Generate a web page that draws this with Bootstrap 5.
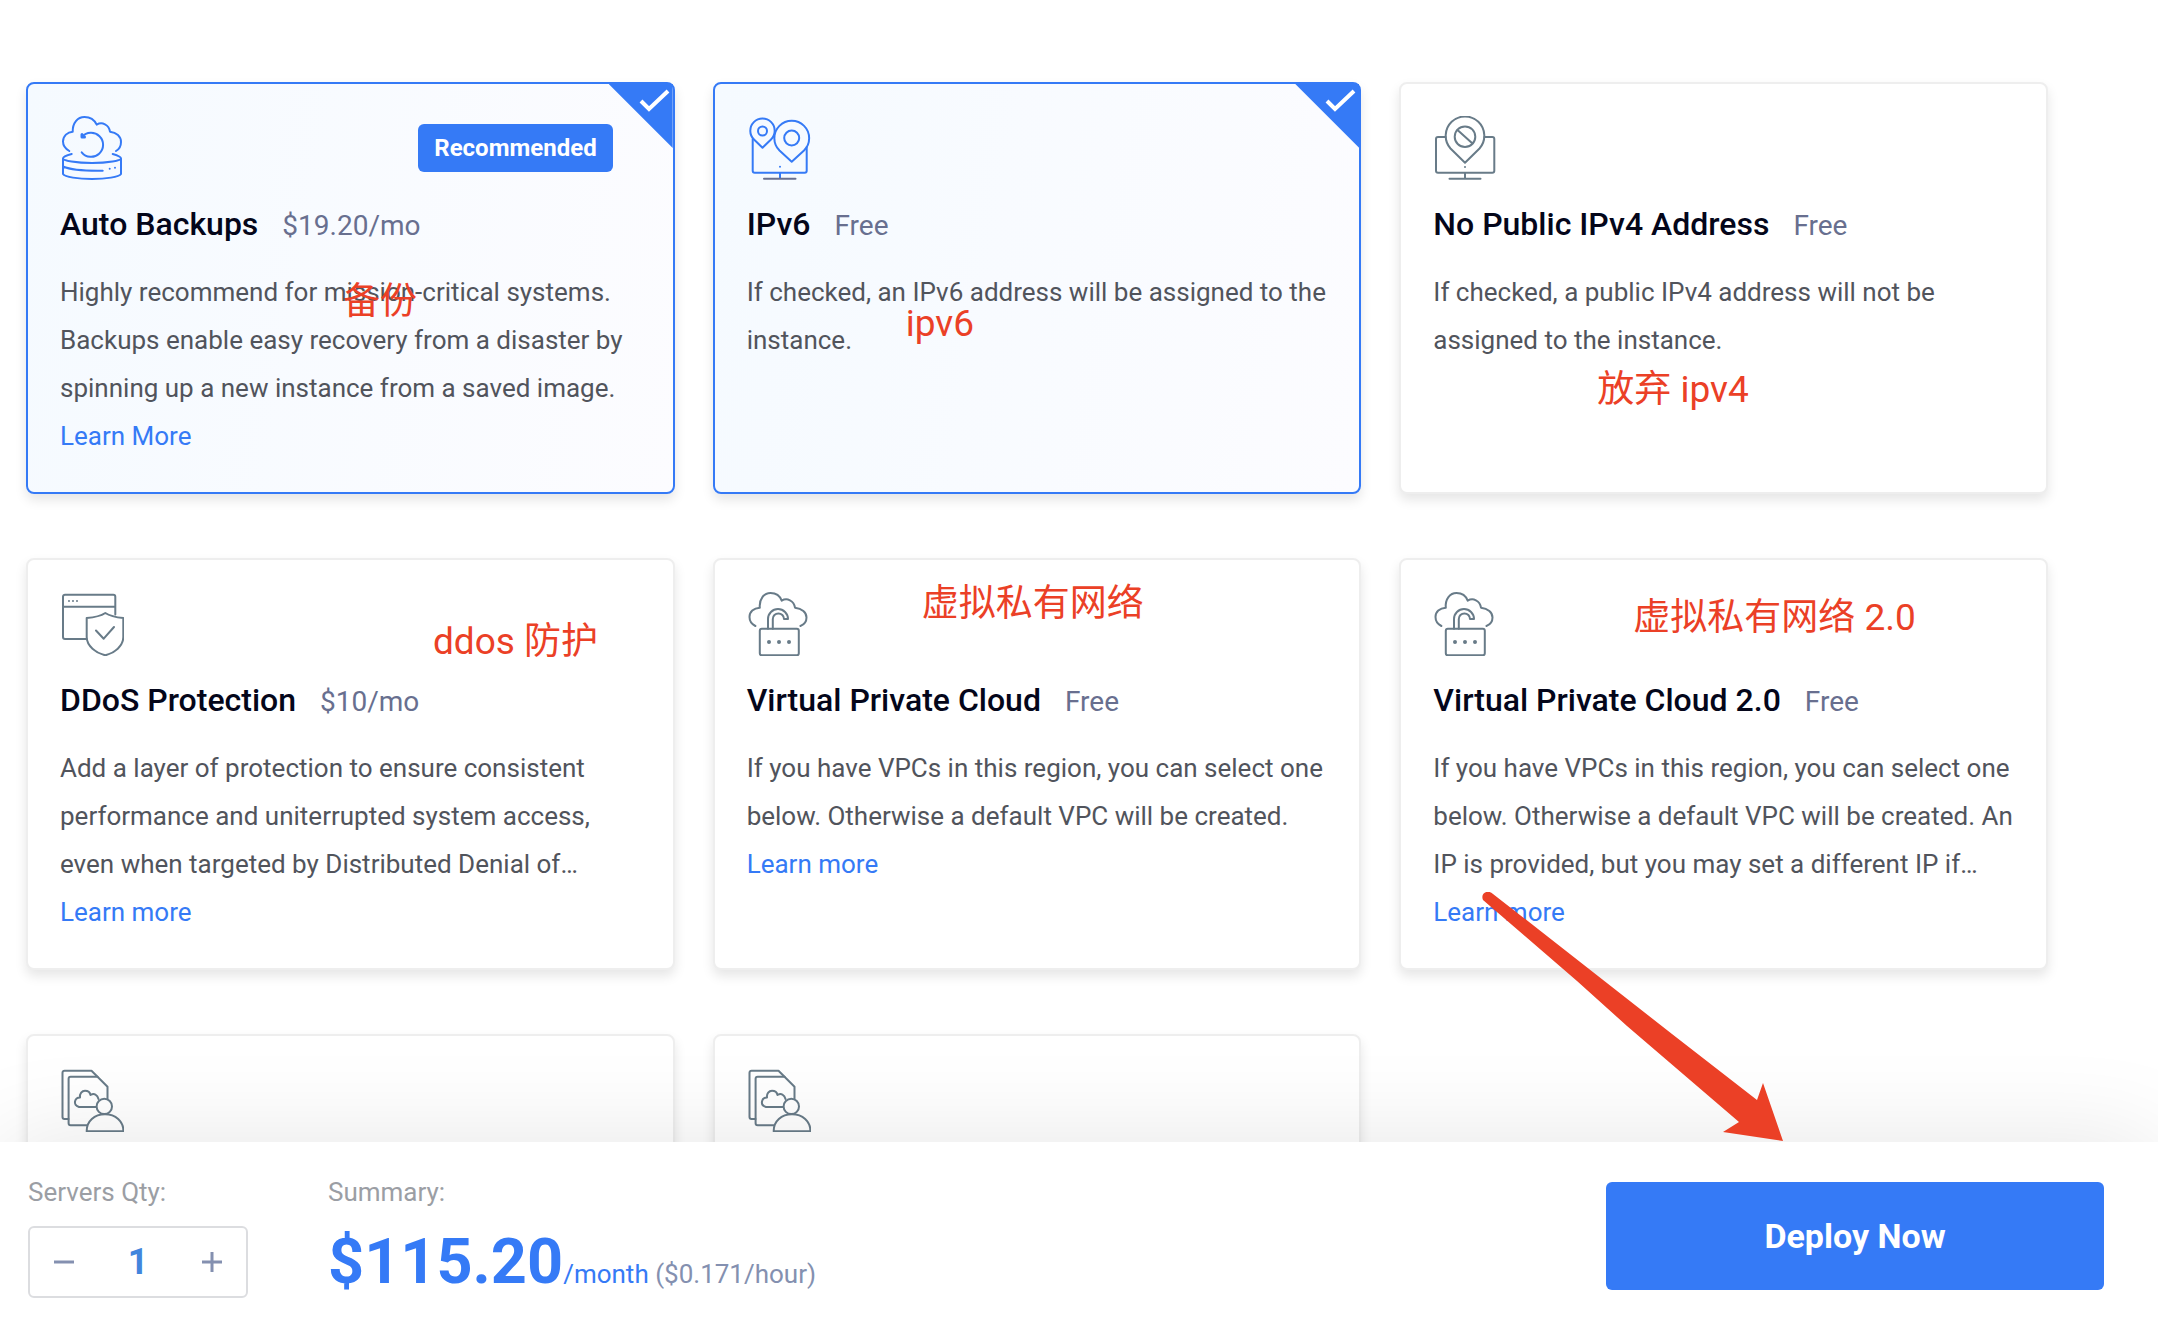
<!DOCTYPE html>
<html lang="en">
<head>
<meta charset="utf-8">
<meta name="viewport" content="width=device-width, initial-scale=1">
<title>Deploy server</title>
<link href="https://cdn.jsdelivr.net/npm/bootstrap@5.3.0/dist/css/bootstrap.min.css" rel="stylesheet">
<style>
:root { --brand: #357af6; --red: #eb4026; --steel: #687b88; }
body { font-family: Roboto, "Noto Sans CJK SC", sans-serif; font-size: 26px; color: #51545c; background: #fff; }
main { padding: 82px 110px 64px 26px; scrollbar-width: none; }
.features { --bs-gutter-x: 38px; --bs-gutter-y: 64px; margin-top: 0; }
.features > * { margin-top: 0; margin-bottom: var(--bs-gutter-y); }
.feature { border: 2px solid #eee; border-radius: 8px; min-height: 412px; box-shadow: 0 6px 12px rgba(0,0,0,.1); color: inherit; }
.feature .card-body { padding: 32px 28px 32px 32px; }
.feature.selected { border-color: var(--brand); background: linear-gradient(100deg, #f5faff, #fcfcff); }
.pictogram { width: 64px; height: 64px; fill: none; stroke: var(--steel); stroke-width: 2; stroke-linecap: round; stroke-linejoin: round; display: block; overflow: visible; }
.selected .pictogram { stroke: var(--brand); }
.heading-row { gap: 24px; margin: 20px 0; height: 48px; line-height: 48px; }
.heading-row label { font-size: 32px; font-weight: 500; color: #04061a; }
.rate { font-size: 28px; color: #686f8f; }
.blurb { line-height: 48px; margin: 0; }
.blurb a, .more { line-height: 48px; color: var(--brand); text-decoration: none; }
.more { display: block; }
.recommend { background: var(--brand); font-size: 24px; font-weight: 700; line-height: 48px; padding: 0 16px; border-radius: 6px; margin: 8px 32px 8px 0; }
.picker { appearance: none; position: absolute; top: 0; right: 0; width: 64px; height: 64px; margin: 0; cursor: pointer; }
.picker:checked { clip-path: polygon(0 0, 100% 0, 100% 100%); background: var(--brand) url("data:image/svg+xml,%3Csvg xmlns='http://www.w3.org/2000/svg' viewBox='0 0 64 64'%3E%3Cpath d='M32 17l8 8L59 7' fill='none' stroke='white' stroke-width='4'/%3E%3C/svg%3E"); }
.note { position: absolute; left: var(--x); top: var(--y); font-size: 37px; line-height: 48px; color: var(--red); white-space: nowrap; pointer-events: none; }
.note-backup { --x: 315px; --y: 194px; }
.note-ipv6 { --x: 191px; --y: 216px; }
.note-ipv4 { --x: 196px; --y: 282px; }
.note-ddos { --x: 405px; --y: 58px; }
.note-vpc { --x: 207px; --y: 20px; }
.note-vpc2 { --x: 232px; --y: 34px; }
.pointer { position: absolute; left: 80px; top: 332px; width: 304px; height: 250px; z-index: 20; pointer-events: none; }
.deploy-bar { position: relative; z-index: 10; background: #fff; box-shadow: 0 0 100px rgba(0,0,0,.1); padding: 32px 54px 30px 28px; }
.caption-text { color: #9b9ea4; line-height: 36px; }
.qty { width: 220px; height: 72px; border: 2px solid #dcdde0; border-radius: 6px; margin-top: 16px; }
.qty button { width: 68px; color: #8490b0; background: none; border: 0; padding: 0; }
.qty button svg { width: 22px; height: 22px; stroke: currentColor; stroke-width: 3; display: block; margin: auto; }
.qty input { width: 72px; border: 0; padding: 0; text-align: center; font-size: 36px; font-weight: 700; color: #4285dd; background: none; }
.summary { margin-left: 80px; }
.total { height: 72px; line-height: 72px; margin-top: 16px; color: var(--brand); }
.total strong { font-size: 63px; font-weight: 700; }
.hourly { color: #8490b0; }
.deploy { background: var(--brand); color: #fff; width: 498px; height: 108px; font-size: 34px; font-weight: 700; border: 0; border-radius: 6px; margin-top: 8px; }
.deploy:hover { background: #2468e0; color: #fff; }
</style>
</head>
<body class="d-flex flex-column vh-100 overflow-hidden">

<svg class="d-none" aria-hidden="true">
  <symbol id="backup" viewBox="0 0 64 64">
    <path d="M9.300 35C5 32.500 3 29 3 25.500C3 20 7.500 16 12.700 15.700C12.500 7 17.500 1 24.500 1C30 1 34.500 4 36.700 8.700C42 5.500 49 8.500 50 15.700C56.500 16.500 61 20.500 61 26C61 29.500 59.500 33 56 35"/>
    <path d="M22 21A12 12 0 1 1 21.700 36.300"/><path d="M22 18.500v2.500h2.500" stroke-width="3"/>
    <path d="M11.700 38C6 39.500 3 41 3 42.500C3 44.500 16 47 32 47S61 44.500 61 42.500C61 41 58 39.500 52.700 38M3 42.500V58C5 61 18 63 32 63S59 61 61 58V42.500M3 50.500C10 53.500 25 55 42.700 54.700M49.700 52.700v.1M55 51.700v.1"/>
  </symbol>
  <symbol id="pins" viewBox="0 0 64 64">
    <path d="M15.500 31.700L7 23.500A12.200 12.200 0 1 1 24 23.500Z"/><circle cx="15.500" cy="15" r="4.500"/>
    <path d="M44.700 45.700L32.500 34.500A17.400 17.400 0 1 1 57 34.500Z"/><circle cx="44.700" cy="22" r="7.500"/>
    <path d="M5.700 23V54.700a2 2 0 0 0 2 2H57.700a2 2 0 0 0 2-2V31M33 50.700v.1M33 57v5"/>
    <path d="M17 62.700H48.500" stroke="#686f8f"/>
  </symbol>
  <symbol id="blocked" viewBox="0 0 64 64">
    <path d="M32 46.700L17.500 32.500A19.300 19.300 0 1 1 46.500 32.500Z"/><circle cx="32" cy="20.700" r="10.300"/>
    <path d="M24.500 14L39.500 27.500M12.500 21H5a2 2 0 0 0-2 2V54.700a2 2 0 0 0 2 2H59.300a2 2 0 0 0 2-2V23a2 2 0 0 0-2-2H51.500M32 51v.1M32 57v5.700M16.500 62.700H47.500"/>
  </symbol>
  <symbol id="shield" viewBox="0 0 64 64">
    <path d="M26.500 47H5a2 2 0 0 1-2-2V4.700a2 2 0 0 1 2-2H53.300a2 2 0 0 1 2 2V22.500M3 14.700H55.300M9 9v.1M13 9v.1M17 9v.1"/>
    <path d="M45.300 21C40 24.500 33 25.500 26.700 26V45C26.700 54 36 61 45.300 63.300C54.500 61 63.300 54 63.300 45V26C57.500 25.500 50.500 24.500 45.300 21ZM36 38.500L43.700 46.700L54 35"/>
  </symbol>
  <symbol id="cloudlock" viewBox="0 0 64 64">
    <path d="M8.400 34C4.500 32 2.500 28.500 2.500 25C2.500 20 6.500 16 12.800 15.700C12 7 17 1 23.500 1C29 1 33 4 34.700 8.700C40 5.500 47 8.500 48 15.700C55 16.500 59.500 20.500 59.500 25.500C59.500 29 57.500 32.500 53.400 34"/>
    <rect x="12.800" y="36.700" width="39" height="26.600" rx="2"/>
    <path d="M21 36.700V27A10 10 0 0 1 41 27H37A5.600 5.600 0 0 0 25.800 27V36.700"/>
    <path d="M22 50v.1M32 50v.1M42 50v.1" stroke-width="4"/>
  </symbol>
  <symbol id="sheets" viewBox="0 0 64 64">
    <path d="M8.500 51H4.500a2 2 0 0 1-2-2V4.700a2 2 0 0 1 2-2H31.500L37.500 8.700"/>
    <path d="M26.500 57.300H10.600a2 2 0 0 1-2-2V10.700a2 2 0 0 1 2-2H37.500L47.500 18.700V31"/>
    <path d="M36 39H19C16 38 14.500 36 15 33.500C15.500 31 17.500 29.500 20 29.500C19.500 25.500 22 22.700 25 22.700C28 22.700 30 24.500 30.500 27C34 25 37.500 26.500 38.500 31"/>
    <circle cx="44.300" cy="38.400" r="7.700"/>
    <path d="M26.700 63.300C26.500 53 34.500 46.300 45 46.300S63.500 53 63.400 63.300Z"/>
  </symbol>
</svg>

<main class="flex-grow-1 overflow-auto">
  <div class="row row-cols-3 features">
    <div class="col"><div class="card h-100 feature selected">
      <input class="picker" type="checkbox" id="opt-backups" checked>
      <div class="card-body">
        <div class="d-flex justify-content-between align-items-start">
          <svg class="pictogram"><use href="#backup"/></svg>
          <span class="recommend text-white">Recommended</span>
        </div>
        <div class="d-flex align-items-baseline heading-row"><label for="opt-backups">Auto Backups</label><span class="rate">$19.20/mo</span></div>
        <p class="blurb">Highly recommend for mission-critical systems. Backups enable easy recovery from a disaster by spinning up a new instance from a saved image. <a href="#">Learn More</a></p>
      </div>
      <span class="note note-backup" lang="zh">备份</span>
    </div></div>
    <div class="col"><div class="card h-100 feature selected">
      <input class="picker" type="checkbox" id="opt-ipv6" checked>
      <div class="card-body">
        <svg class="pictogram"><use href="#pins"/></svg>
        <div class="d-flex align-items-baseline heading-row"><label for="opt-ipv6">IPv6</label><span class="rate">Free</span></div>
        <p class="blurb">If checked, an IPv6 address will be assigned to the instance.</p>
      </div>
      <span class="note note-ipv6">ipv6</span>
    </div></div>
    <div class="col"><div class="card h-100 feature">
      <input class="picker" type="checkbox" id="opt-noipv4">
      <div class="card-body">
        <svg class="pictogram"><use href="#blocked"/></svg>
        <div class="d-flex align-items-baseline heading-row"><label for="opt-noipv4">No Public IPv4 Address</label><span class="rate">Free</span></div>
        <p class="blurb">If checked, a public IPv4 address will not be assigned to the instance.</p>
      </div>
      <span class="note note-ipv4" lang="zh">放弃 ipv4</span>
    </div></div>
    <div class="col"><div class="card h-100 feature">
      <input class="picker" type="checkbox" id="opt-ddos">
      <div class="card-body">
        <svg class="pictogram"><use href="#shield"/></svg>
        <div class="d-flex align-items-baseline heading-row"><label for="opt-ddos">DDoS Protection</label><span class="rate">$10/mo</span></div>
        <p class="blurb">Add a layer of protection to ensure consistent performance and uniterrupted system access, even when targeted by Distributed Denial of…</p>
        <a class="more" href="#">Learn more</a>
      </div>
      <span class="note note-ddos" lang="zh">ddos 防护</span>
    </div></div>
    <div class="col"><div class="card h-100 feature">
      <input class="picker" type="checkbox" id="opt-vpc">
      <div class="card-body">
        <svg class="pictogram"><use href="#cloudlock"/></svg>
        <div class="d-flex align-items-baseline heading-row"><label for="opt-vpc">Virtual Private Cloud</label><span class="rate">Free</span></div>
        <p class="blurb">If you have VPCs in this region, you can select one below. Otherwise a default VPC will be created.</p>
        <a class="more" href="#">Learn more</a>
      </div>
      <span class="note note-vpc" lang="zh">虚拟私有网络</span>
    </div></div>
    <div class="col"><div class="card h-100 feature">
      <input class="picker" type="checkbox" id="opt-vpc2">
      <div class="card-body">
        <svg class="pictogram"><use href="#cloudlock"/></svg>
        <div class="d-flex align-items-baseline heading-row"><label for="opt-vpc2">Virtual Private Cloud 2.0</label><span class="rate">Free</span></div>
        <p class="blurb">If you have VPCs in this region, you can select one below. Otherwise a default VPC will be created. An IP is provided, but you may set a different IP if…</p>
        <a class="more" href="#">Learn more</a>
      </div>
      <span class="note note-vpc2" lang="zh">虚拟私有网络 2.0</span>
      <svg class="pointer" viewBox="0 0 304 250" fill="#eb4026"><path d="M2 8C-1 1 7-3 12 2L57 37L191 142L276 208L282 191L302 249L242 240L258 230L146 134L96 89Z"/></svg>
    </div></div>
    <div class="col"><div class="card h-100 feature"><div class="card-body"><svg class="pictogram"><use href="#sheets"/></svg></div></div></div>
    <div class="col"><div class="card h-100 feature"><div class="card-body"><svg class="pictogram"><use href="#sheets"/></svg></div></div></div>
  </div>
</main>

<footer class="deploy-bar d-flex align-items-start">
  <div>
    <label class="caption-text d-block" for="qty">Servers Qty:</label>
    <div class="qty d-flex align-items-stretch justify-content-between">
      <button type="button" aria-label="Decrease"><svg viewBox="0 0 22 22"><path d="M1 11H21"/></svg></button>
      <input id="qty" type="text" inputmode="numeric" value="1">
      <button type="button" aria-label="Increase"><svg viewBox="0 0 22 22"><path d="M1 11H21M11 1V21"/></svg></button>
    </div>
  </div>
  <div class="summary">
    <div class="caption-text">Summary:</div>
    <div class="total"><strong>$115.20</strong>/month <span class="hourly">($0.171/hour)</span></div>
  </div>
  <button class="btn deploy ms-auto" type="button">Deploy Now</button>
</footer>
<script src="https://cdn.jsdelivr.net/npm/bootstrap@5.3.0/dist/js/bootstrap.bundle.min.js"></script>
</body>
</html>
